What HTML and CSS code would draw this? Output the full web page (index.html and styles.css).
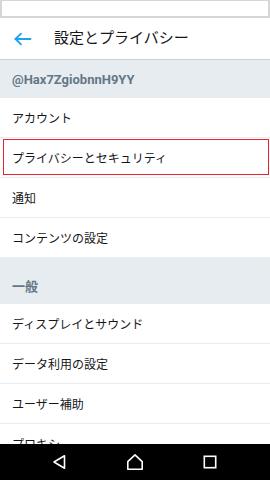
FILE: index.html
```html
<!DOCTYPE html>
<html lang="ja">
<head>
<meta charset="utf-8">
<title>設定とプライバシー</title>
<link rel="stylesheet" href="styles.css">
</head>
<body>
<div class="screen">
  <div class="statusbar"></div>
  <header class="appbar">
    <svg class="back" width="20" height="16" viewBox="0 0 20 16">
      <path d="M2.2 8H17.5 M8 2.6L2.6 8L8 13.4" fill="none" stroke="#1da1f2" stroke-width="1.8" stroke-linecap="round" stroke-linejoin="round"/>
    </svg>
    <h1 class="title">設定とプライバシー</h1>
  </header>
  <main class="content">
    <div class="section-head">@Hax7ZgiobnnH9YY</div>
    <div class="row">アカウント</div>
    <div class="row row-highlight">プライバシーとセキュリティ</div>
    <div class="row">通知</div>
    <div class="row">コンテンツの設定</div>
    <div class="section-gap"></div>
    <div class="section-head">一般</div>
    <div class="row">ディスプレイとサウンド</div>
    <div class="row">データ利用の設定</div>
    <div class="row">ユーザー補助</div>
    <div class="row">プロキシ</div>
  </main>
  <nav class="navbar">
    <svg width="16" height="16" viewBox="0 0 16 16">
      <path d="M12.5 1.8V14.2L2 8Z" fill="none" stroke="#fff" stroke-width="1.6" stroke-linejoin="round"/>
    </svg>
    <svg width="18" height="18" viewBox="0 0 18 18">
      <path d="M1.8 16.2V8.6L9 1.8L16.2 8.6V16.2Z" fill="none" stroke="#fff" stroke-width="1.6" stroke-linejoin="round"/>
    </svg>
    <svg width="16" height="16" viewBox="0 0 16 16">
      <rect x="2.3" y="2.3" width="11.4" height="11.4" fill="none" stroke="#fff" stroke-width="1.6"/>
    </svg>
  </nav>
</div>
</body>
</html>
```

FILE: styles.css
```css
html, body {
  margin: 0;
  padding: 0;
  background: #fff;
}

.screen {
  width: 270px;
  height: 480px;
  display: flex;
  flex-direction: column;
  overflow: hidden;
  font-family: Roboto, "Noto Sans CJK JP", sans-serif;
  color: #14171a;
}

.statusbar {
  flex: 0 0 18px;
  box-sizing: border-box;
  border: 2px solid #d6d6d6;
  border-top-width: 1px;
  background: #fff;
}

.appbar {
  flex: 0 0 42px;
  box-sizing: border-box;
  display: flex;
  align-items: center;
  padding-left: 13px;
  border-bottom: 1px solid #c9d1d7;
  background: #fff;
}

.back {
  display: block;
  margin-top: 1px;
}

.title {
  margin: 0 0 0 21px;
  font-size: 15px;
  font-weight: 400;
  line-height: 1;
  color: #14171a;
}

.content {
  flex: 1 1 auto;
  min-height: 0;
  overflow: hidden;
  background: #fff;
}

.section-head {
  height: 38px;
  display: flex;
  align-items: center;
  padding-left: 12px;
  background: #e6ecf0;
  color: #657786;
  font-size: 13px;
  font-weight: 700;
}

.section-gap {
  height: 8px;
  background: #e6ecf0;
}

.row {
  position: relative;
  height: 39px;
  display: flex;
  align-items: center;
  padding-left: 12px;
  border-bottom: 1px solid #e6ecf0;
  font-size: 12px;
  color: #14171a;
}

.row-highlight::after {
  content: "";
  position: absolute;
  top: 1px;
  left: 3px;
  right: 1px;
  bottom: 2px;
  border: 1px solid #e8222f;
}

.navbar {
  flex: 0 0 36px;
  display: grid;
  grid-template-columns: repeat(3, 75px);
  justify-content: center;
  justify-items: center;
  align-items: center;
  background: #000;
}

.navbar svg {
  display: block;
}
```
